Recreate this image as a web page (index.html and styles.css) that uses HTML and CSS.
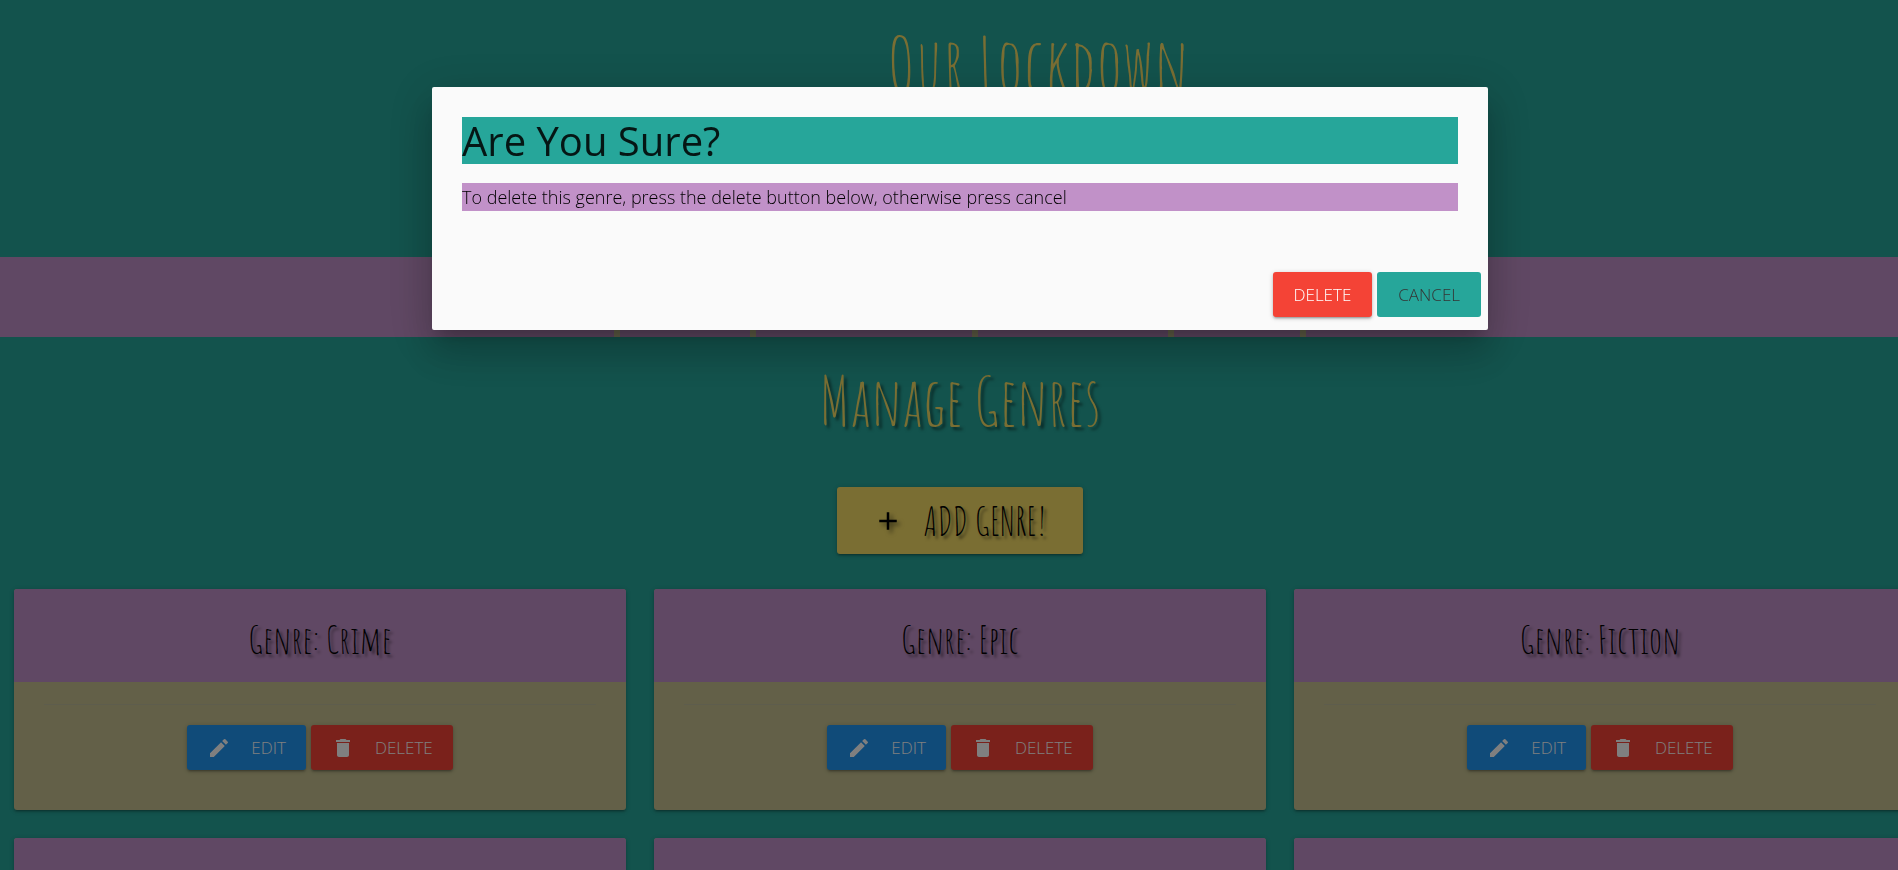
FILE: index.html
```html
<!DOCTYPE html>
<html lang="en">
<head>
  <meta charset="utf-8">
  <title>Manage Genres</title>
  <link rel="stylesheet" href="styles.css">
</head>
<body>
  <svg class="sprite" aria-hidden="true">
    <symbol id="pencil" viewBox="0 0 24 24"><path d="M3 17.25V21h3.75L17.81 9.94l-3.75-3.75L3 17.25zM20.71 7.04a1 1 0 0 0 0-1.41l-2.34-2.34a1 1 0 0 0-1.41 0l-1.83 1.83 3.75 3.75 1.83-1.83z"/></symbol>
    <symbol id="trash" viewBox="0 0 24 24"><path d="M6 19c0 1.1.9 2 2 2h8c1.100 0 2-.9 2-2V7H6v12zM19 4h-3.500l-1-1h-5l-1 1H5v2h14V4z"/></symbol>
    <symbol id="plus" viewBox="0 0 24 24"><path d="M19 13h-6v6h-2v-6H5v-2h6V5h2v6h6v2z"/></symbol>
  </svg>
  <div class="page">
    <header class="banner"><h1 class="banner-title">Our Lockdown</h1></header>
    <nav class="menu">
      <ul class="menu-list"><li class="menu-item"></li><li class="menu-item"></li><li class="menu-item"></li><li class="menu-item"></li></ul>
    </nav>
    <main class="content">
      <h2 class="page-title">Manage Genres</h2>
      <button class="btn btn-add" type="button"><svg class="icon icon-large"><use href="#plus"/></svg>Add Genre!</button>
      <div class="cards">
        <article class="card">
          <h3 class="card-title">Genre: Crime</h3>
          <div class="card-body"><hr class="rule"><div class="actions">
            <button class="btn btn-blue" type="button"><svg class="icon"><use href="#pencil"/></svg>Edit</button>
            <button class="btn btn-red" type="button"><svg class="icon"><use href="#trash"/></svg>Delete</button>
          </div></div>
        </article>
        <article class="card">
          <h3 class="card-title">Genre: Epic</h3>
          <div class="card-body"><hr class="rule"><div class="actions">
            <button class="btn btn-blue" type="button"><svg class="icon"><use href="#pencil"/></svg>Edit</button>
            <button class="btn btn-red" type="button"><svg class="icon"><use href="#trash"/></svg>Delete</button>
          </div></div>
        </article>
        <article class="card">
          <h3 class="card-title">Genre: Fiction</h3>
          <div class="card-body"><hr class="rule"><div class="actions">
            <button class="btn btn-blue" type="button"><svg class="icon"><use href="#pencil"/></svg>Edit</button>
            <button class="btn btn-red" type="button"><svg class="icon"><use href="#trash"/></svg>Delete</button>
          </div></div>
        </article>
        <article class="card"><div class="card-title"></div></article>
        <article class="card"><div class="card-title"></div></article>
        <article class="card"><div class="card-title"></div></article>
      </div>
    </main>
  </div>
  <div class="overlay">
    <section class="modal" role="dialog" aria-modal="true" aria-labelledby="modal-title">
      <div class="modal-content">
        <h2 class="modal-title" id="modal-title">Are You Sure?</h2>
        <p class="modal-text">To delete this genre, press the delete button below, otherwise press cancel</p>
      </div>
      <div class="modal-footer">
        <button class="btn btn-red" type="button">Delete</button>
        <button class="btn btn-flat" type="button">Cancel</button>
      </div>
    </section>
  </div>
</body>
</html>
```
FILE: styles.css
```css
:root {
  --teal: #26a69a;
  --purple: #c191c8;
  --yellow: #f4dc66;
  --olive: #c6c190;
  --gutter: 22px;
  --display: "Amatic SC", "Open Sans Condensed", Lato, sans-serif;
}

* { box-sizing: border-box; }

html, body { height: 100%; }

body {
  margin: 0;
  overflow: hidden;
  background: var(--teal);
  color: rgba(0, 0, 0, 0.87);
  font-family: "Open Sans", "Noto Sans", sans-serif;
  font-size: 18px;
}

h1, h2, h3, p, ul { margin: 0; padding: 0; font-weight: 400; }

.sprite { display: none; }

.page {
  height: 100%;
  margin-right: calc(-1 * var(--gutter));
  overflow: hidden;
}

.banner {
  display: flex;
  justify-content: center;
  height: 257px;
  padding: 14px 0 0 156px;
}

.banner-title {
  color: var(--yellow);
  font-family: var(--display);
  font-size: 76px;
  line-height: 100px;
}

.menu {
  display: flex;
  justify-content: center;
  height: 80px;
  background: var(--purple);
}

.menu-list {
  display: grid;
  grid-template-columns: 142px 222px 196px 132px;
  list-style: none;
}

.menu-item { border-right: 6px solid var(--olive); }
.menu-item:first-child { border-left: 6px solid var(--olive); }

.content {
  display: flex;
  flex-direction: column;
  align-items: center;
}

.page-title {
  padding: 27px 0 51px;
  color: var(--yellow);
  font-family: var(--display);
  font-size: 67px;
  line-height: 72px;
  text-shadow: 3px 3px 3px rgba(0, 0, 0, 0.5);
}

.btn {
  display: inline-flex;
  align-items: center;
  justify-content: center;
  gap: 20px;
  height: 45px;
  padding: 0 20px;
  border: 0;
  border-radius: 3px;
  color: #fff;
  font-family: inherit;
  font-size: 17px;
  font-weight: 300;
  text-transform: uppercase;
  box-shadow: 0 2px 2px rgba(0, 0, 0, 0.14), 0 3px 1px -2px rgba(0, 0, 0, 0.12), 0 1px 5px rgba(0, 0, 0, 0.2);
}

.btn-blue { background: #2196f3; }
.btn-red { background: #f44336; }
.btn-flat { background: var(--teal); color: #343434; box-shadow: none; }

.btn-add {
  height: 67px;
  padding: 0 36px;
  background: var(--yellow);
  color: #000;
  font-family: var(--display);
  font-size: 40px;
  font-weight: 400;
  text-shadow: 3px 3px 3px rgba(0, 0, 0, 0.5);
}

.icon { width: 24px; height: 24px; fill: currentColor; }

.icon-large {
  width: 30px;
  height: 30px;
  filter: drop-shadow(3px 3px 2px rgba(0, 0, 0, 0.5));
}

.cards {
  display: grid;
  grid-template-columns: repeat(3, 1fr);
  gap: 28px;
  width: 100%;
  padding: 35px 14px;
}

.card {
  overflow: hidden;
  border-radius: 3px;
  background: var(--olive);
  box-shadow: 0 2px 2px rgba(0, 0, 0, 0.14), 0 3px 1px -2px rgba(0, 0, 0, 0.12), 0 1px 5px rgba(0, 0, 0, 0.2);
}

.card-title {
  height: 93px;
  padding-top: 28px;
  background: var(--purple);
  color: #000;
  font-family: var(--display);
  font-size: 39px;
  line-height: 45px;
  text-align: center;
  text-shadow: 3px 3px 3px rgba(0, 0, 0, 0.5);
}

.card-body { padding: 22px 30px 40px; }

.rule {
  height: 1px;
  margin: 0 0 20px;
  border: 0;
  background: #bdbb9a;
}

.actions { display: flex; justify-content: center; gap: 5px; }

.overlay {
  position: fixed;
  inset: 0 calc(-1 * var(--gutter)) 0 0;
  padding-top: 87px;
  background: rgba(0, 0, 0, 0.5);
}

.modal {
  width: 55%;
  margin: 0 auto;
  border-radius: 2px;
  background: #fafafa;
  box-shadow: 0 24px 38px 3px rgba(0, 0, 0, 0.14), 0 9px 46px 8px rgba(0, 0, 0, 0.12), 0 11px 15px -7px rgba(0, 0, 0, 0.2);
}

.modal-content { padding: 30px 30px 61px; }

.modal-title {
  margin-bottom: 19px;
  background: var(--teal);
  font-size: 40px;
  line-height: 47px;
}

.modal-text {
  background: var(--purple);
  font-size: 18px;
  font-weight: 300;
  line-height: 28px;
  color: #000;
}

.modal-footer {
  display: flex;
  justify-content: flex-end;
  gap: 5px;
  padding: 0 7px 13px;
}

.modal-footer .btn { padding: 0 21px; }
```
